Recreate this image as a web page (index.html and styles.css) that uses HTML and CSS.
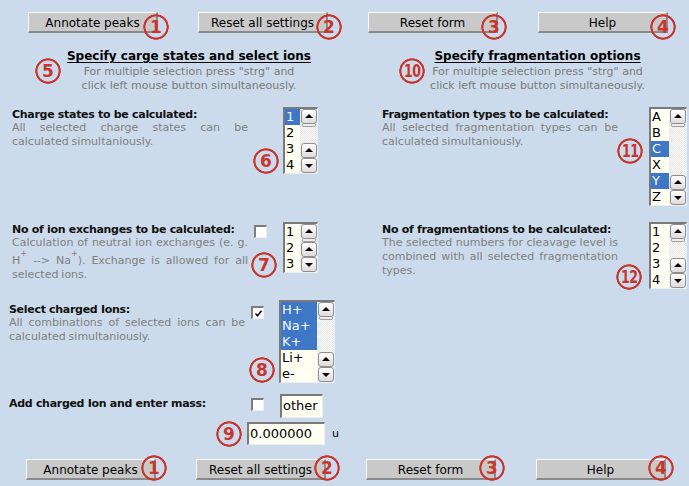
FILE: index.html
```html
<!DOCTYPE html>
<html>
<head>
<meta charset="utf-8">
<link rel="stylesheet" href="styles.css">
</head>
<body>
<div class="page">
  <div class="btnbar btnbar-top">
    <div class="bwrap"><button class="btn">Annotate peaks</button><span class="badge">1</span></div>
    <div class="bwrap"><button class="btn">Reset all settings</button><span class="badge">2</span></div>
    <div class="bwrap"><button class="btn">Reset form</button><span class="badge">3</span></div>
    <div class="bwrap"><button class="btn">Help</button><span class="badge">4</span></div>
  </div>

  <div class="cols">
    <div class="col col-left">
      <div class="colhead">
        <span class="badge hb-left">5</span>
        <h2 class="head">Specify carge states and select ions</h2>
        <p class="sub">For multiple selection press "strg" and<br>click left mouse button simultaneously.</p>
      </div>

      <div class="sec sec-a">
        <div class="txt">
          <div class="lbl">Charge states to be calculated:</div>
          <div class="desc">All selected charge states can be calculated simultaniously.</div>
        </div>
        <div class="ctl">
          <span class="cbslot"></span>
          <div class="lb">
            <div class="items w15">
              <div class="opt sel">1</div><div class="opt">2</div><div class="opt">3</div><div class="opt">4</div>
            </div>
            <div class="sb"><span class="sbb up"></span><span class="thumb"></span><span class="track"></span><span class="sbb up"></span><span class="sbb down"></span></div>
          </div>
        </div>
        <span class="badge b6">6</span>
      </div>

      <div class="sec sec-b">
        <div class="txt">
          <div class="lbl">No of ion exchanges to be calculated:</div>
          <div class="desc">Calculation of neutral ion exchanges (e. g. H<sup>+</sup> --&gt; Na<sup>+</sup>). Exchange is allowed for all selected ions.</div>
        </div>
        <div class="ctl">
          <span class="cb cb-b"></span>
          <div class="lb">
            <div class="items w15">
              <div class="opt">1</div><div class="opt">2</div><div class="opt">3</div>
            </div>
            <div class="sb"><span class="sbb up"></span><span class="thumb"></span><span class="track"></span><span class="sbb up"></span><span class="sbb down"></span></div>
          </div>
        </div>
        <span class="badge b7">7</span>
      </div>

      <div class="sec sec-c">
        <div class="txt">
          <div class="lbl">Select charged Ions:</div>
          <div class="desc">All combinations of selected ions can be calculated simultaniously.</div>
        </div>
        <div class="ctl">
          <span class="cb cb-c"><svg class="tick" width="9" height="9" viewBox="0 0 9 9"><path d="M1.5 4.5 L3.5 6.8 L7.5 1.8" fill="none" stroke="#000" stroke-width="1.4"/></svg></span>
          <div class="lb lb-c">
            <div class="items w36">
              <div class="opt sel">H+</div><div class="opt sel">Na+</div><div class="opt sel">K+</div><div class="opt">Li+</div><div class="opt">e-</div>
            </div>
            <div class="sb"><span class="sbb up"></span><span class="thumb"></span><span class="track"></span><span class="sbb up"></span><span class="sbb down"></span></div>
          </div>
        </div>
        <span class="badge b8">8</span>
      </div>

      <div class="sec sec-d">
        <div class="row-d">
          <div class="txt">
            <div class="lbl">Add charged Ion and enter mass:</div>
          </div>
          <div class="ctl">
            <span class="cb cb-d"></span>
            <span class="field f-other">other</span>
          </div>
        </div>
        <div class="row-mass">
          <span class="field f-mass">0.000000</span>
          <span class="unit">u</span>
        </div>
        <span class="badge b9">9</span>
      </div>
    </div>

    <div class="col col-right">
      <div class="colhead colhead-right">
        <span class="badge hb-right"><span class="dd">10</span></span>
        <h2 class="head">Specify fragmentation options</h2>
        <p class="sub">For multiple selection press "strg" and<br>click left mouse button simultaneously.</p>
      </div>

      <div class="sec sec-ra">
        <div class="txt">
          <div class="lbl">Fragmentation types to be calculated:</div>
          <div class="desc">All selected fragmentation types can be calculated simultaniously.</div>
        </div>
        <div class="ctl">
          <div class="lb">
            <div class="items w18">
              <div class="opt">A</div><div class="opt">B</div><div class="opt sel">C</div><div class="opt">X</div><div class="opt sel">Y</div><div class="opt">Z</div>
            </div>
            <div class="sb"><span class="sbb up"></span><span class="thumb"></span><span class="track"></span><span class="sbb up"></span><span class="sbb down"></span></div>
          </div>
        </div>
        <span class="badge b11"><span class="dd">11</span></span>
      </div>

      <div class="sec sec-rb">
        <div class="txt">
          <div class="lbl">No of fragmentations to be calculated:</div>
          <div class="desc">The selected numbers for cleavage level is combined with all selected fragmentation types.</div>
        </div>
        <div class="ctl">
          <div class="lb">
            <div class="items w18">
              <div class="opt">1</div><div class="opt">2</div><div class="opt">3</div><div class="opt">4</div>
            </div>
            <div class="sb"><span class="sbb up"></span><span class="thumb"></span><span class="track"></span><span class="sbb up"></span><span class="sbb down"></span></div>
          </div>
        </div>
        <span class="badge b12"><span class="dd">12</span></span>
      </div>
    </div>
  </div>

  <div class="btnbar btnbar-bottom">
    <div class="bwrap"><button class="btn">Annotate peaks</button><span class="badge">1</span></div>
    <div class="bwrap"><button class="btn">Reset all settings</button><span class="badge">2</span></div>
    <div class="bwrap"><button class="btn">Reset form</button><span class="badge">3</span></div>
    <div class="bwrap"><button class="btn">Help</button><span class="badge">4</span></div>
  </div>
</div>
</body>
</html>
```

FILE: styles.css
```css
* { box-sizing: border-box; }
body {
  margin: 0;
  background: #ccdbeb;
  font-family: "DejaVu Sans", Verdana, sans-serif;
  color: #000;
}
.page { width: 689px; height: 486px; overflow: hidden; }

/* buttons */
.btnbar { display: flex; gap: 40px; }
.btnbar-top { padding: 12px 0 0 28px; }
.btnbar-bottom { padding-left: 26px; }
.bwrap { position: relative; width: 130px; height: 21px; flex: none; }
.btn {
  display: block;
  width: 130px; height: 21px;
  margin: 0; padding: 2px 0 0 0;
  font: 12px/16px "DejaVu Sans", sans-serif;
  color: #000;
  background: #c9c9c9;
  border-style: solid;
  border-width: 1px 2px 2px 1px;
  border-color: #fafafa #8a8a8a #8a8a8a #fafafa;
}

/* red numbered circles */
.badge {
  position: absolute;
  width: 26px; height: 26px;
  display: flex; align-items: center; justify-content: center;
  font: bold 17px/1 "DejaVu Sans", sans-serif;
  color: #c8352d;
  background: radial-gradient(circle closest-side, rgba(200,53,45,0) 10.2px, #c8352d 10.9px, #c8352d 12.4px, rgba(200,53,45,0) 13px);
  padding-top: 1px;
}
.badge .dd { display: inline-block; transform: scaleX(0.74); letter-spacing: -0.5px; }
.btnbar-top .badge { top: 2px; }
.btnbar-bottom .badge { top: -4px; }
.bwrap:nth-child(1) .badge { left: 115px; }
.bwrap:nth-child(2) .badge { left: 118px; }
.bwrap:nth-child(3) .badge { left: 113px; }
.bwrap:nth-child(4) .badge { left: 112px; }

/* columns */
.cols { display: grid; grid-template-columns: 378px 311px; }
.col { display: flex; flex-direction: column; }
.colhead { position: relative; height: 74px; padding-top: 16px; text-align: center; }
.colhead-right { padding-left: 8px; }
.head {
  margin: 0;
  font: bold 12px/15px "DejaVu Sans", sans-serif;
  text-decoration: underline;
  text-underline-offset: 2px;
}
.sub {
  margin: 1px 0 0;
  font: 11px/13.5px "DejaVu Sans", sans-serif;
  color: #7a7a7a;
}
.hb-left { top: 25px; left: 35px; }
.hb-right { top: 25px; left: 21px; }

/* sections */
.sec { position: relative; display: flex; align-items: flex-start; }
.sec-a { height: 115px; padding-left: 12px; }
.sec-b { height: 78px; padding-left: 12px; }
.sec-c { height: 94px; padding-left: 9px; }
.sec-d { height: 65px; padding-left: 9px; flex-direction: column; }
.sec-ra { height: 115px; padding-left: 4px; }
.sec-rb { padding-left: 4px; }

.txt { width: 236px; flex: none; padding-top: 1px; }
.sec-c .txt, .sec-d .txt { padding-top: 3px; }
.lbl {
  font: bold 11px/13px "DejaVu Sans", sans-serif;
  letter-spacing: -0.3px;
  white-space: nowrap;
  color: #111;
}
.desc {
  font: 11px/14px "DejaVu Sans", sans-serif;
  color: #808080;
  text-align: justify;
  word-spacing: -0.6px;
}
.desc sup { font-size: 8px; line-height: 1; vertical-align: 8px; }

.ctl { display: flex; align-items: flex-start; padding-left: 6px; }
.sec-ra .ctl, .sec-rb .ctl { padding-left: 31px; }
.cbslot { width: 13px; flex: none; }
.lb { margin-left: 16px; }
.sec-c .lb { margin-left: 15px; }
.sec-ra .lb, .sec-rb .lb { margin-left: 0; }

/* checkboxes */
.cb {
  width: 13px; height: 13px; flex: none;
  background: #fff;
  border-style: solid;
  border-width: 2px 1px 1px 2px;
  border-color: #7c7c7c #f0f0f0 #f0f0f0 #7c7c7c;
  display: flex; align-items: center; justify-content: center;
}
.cb-b { margin-top: 3px; }
.cb-c { margin-top: 6px; }
.cb-d { margin-top: 4px; }
.tick { display: block; }

/* listboxes */
.lb {
  display: flex; flex: none;
  background: #fffff2;
  border-style: solid;
  border-width: 2px 1px 1px 2px;
  border-color: #7a7a7a #eeeeee #eeeeee #7a7a7a;
}
.items { flex: none; }
.w15 { width: 15px; }
.w18 { width: 18px; }
.w36 { width: 36px; }
.opt {
  height: 16px;
  padding-left: 1px;
  font: 13px/16px "DejaVu Sans", sans-serif;
  color: #000;
  white-space: nowrap;
}
.opt.sel { background: #3d77c5; color: #f4f8ff; }

.sb {
  width: 17px; flex: none;
  display: flex; flex-direction: column;
  background-color: #fff;
  background-image: repeating-conic-gradient(#e4e4e4 0 25%, #ffffff 0 50%);
  background-size: 2px 2px;
}
.sbb {
  position: relative;
  height: 15px; width: 16px;
  margin-left: 1px;
  flex: none;
  border: 1px solid #8e8e8e;
  border-radius: 3px;
  background: linear-gradient(#ffffff, #dcdcdc);
}
.sbb::after {
  content: "";
  position: absolute;
  left: 3px; top: 4px;
  border-left: 4px solid transparent;
  border-right: 4px solid transparent;
}
.sbb.up::after { border-bottom: 4px solid #000; }
.sbb.down::after { border-top: 4px solid #000; top: 5px; }
.thumb {
  height: 3px; flex: none;
  margin: 0 1px 0 2px;
  background: #ececec;
  border: 1px solid #a0a0a0;
  border-top: none;
  border-radius: 0 0 2px 2px;
}
.track { flex: 1; }

/* fields */
.row-d { display: flex; align-items: flex-start; }
.field {
  display: block;
  background: #fffff2;
  border-style: solid;
  border-width: 2px 1px 1px 2px;
  border-color: #7a7a7a #eeeeee #eeeeee #7a7a7a;
  font: 13px/20px "DejaVu Sans", sans-serif;
  padding-left: 1px;
  color: #000;
}
.f-other { width: 43px; height: 24px; margin-left: 16px; }
.row-mass { display: flex; align-items: flex-end; margin-top: 4px; padding-left: 238px; }
.f-mass { width: 78px; height: 23px; }
.unit { font: 11px/1 "DejaVu Sans", sans-serif; margin-left: 7px; padding-bottom: 6px; }
.b6 { top: 41px; left: 253px; }
.b7 { top: 30px; left: 251px; }
.b8 { top: 57px; left: 249px; }
.b9 { top: 27px; left: 216px; }
.b11 { top: 31px; left: 239px; }
.b12 { top: 42px; left: 238px; }
```
